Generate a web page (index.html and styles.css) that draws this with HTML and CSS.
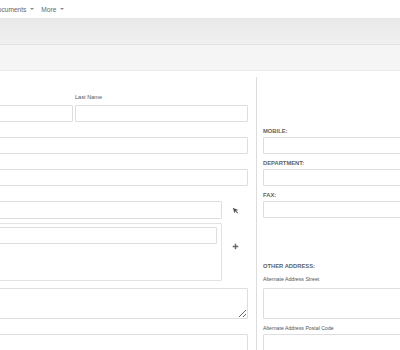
FILE: index.html
```html
<!DOCTYPE html>
<html lang="en">
<head>
    <meta charset="UTF-8">
    <meta name="viewport" content="width=device-width, initial-scale=1.0">
    <title>Edit Contact</title>
    <link rel="stylesheet" href="styles.css">
</head>
<body>
    <nav class="topnav">
        <a class="nav-item">Documents <span class="caret"></span></a>
        <a class="nav-item">More <span class="caret"></span></a>
    </nav>

    <div class="toolbar"></div>
    <div class="subbar"></div>

    <main class="edit-view">
        <section class="panel panel-left">
            <div class="row row-split">
                <div class="field">
                    <span class="field-label"></span>
                    <input class="input" type="text" name="first_name">
                </div>
                <div class="field">
                    <label class="field-label">Last Name</label>
                    <input class="input" type="text" name="last_name">
                </div>
            </div>

            <div class="field">
                <span class="field-label"></span>
                <input class="input" type="text" name="title">
            </div>

            <div class="field">
                <span class="field-label"></span>
                <input class="input" type="text" name="phone_work">
            </div>

            <div class="field field-tight">
                <span class="field-label"></span>
                <div class="with-action">
                    <input class="input input-tall" type="text" name="account_name">
                    <span class="action">
                        <svg width="7" height="7" viewBox="0 0 10 10"><path d="M1 1 L9 4.2 L5.8 5.2 L8.6 8.2 L7.6 9.2 L4.8 6.2 L3.6 9 Z" fill="#555"/></svg>
                    </span>
                </div>
            </div>

            <div class="with-action with-action-top">
                <div class="email-box">
                    <input class="input" type="text" name="email1">
                </div>
                <span class="action action-plus">
                    <svg width="7" height="7" viewBox="0 0 10 10"><path d="M5 1 V9 M1 5 H9" stroke="#666" stroke-width="2"/></svg>
                </span>
            </div>

            <textarea class="textarea textarea-gap" name="primary_address"></textarea>

            <div class="field">
                <span class="field-label"></span>
                <input class="input" type="text" name="assigned_user">
            </div>
        </section>

        <section class="panel panel-right">
            <div class="field">
                <label class="caps-label">Mobile:</label>
                <input class="input" type="text" name="phone_mobile">
            </div>
            <div class="field">
                <label class="caps-label">Department:</label>
                <input class="input" type="text" name="department">
            </div>
            <div class="field">
                <label class="caps-label">Fax:</label>
                <input class="input" type="text" name="phone_fax">
            </div>

            <h4 class="caps-label group-title">Other Address:</h4>
            <label class="small-label">Alternate Address Street</label>
            <textarea class="textarea" name="alt_address_street"></textarea>
            <label class="small-label small-label-gap">Alternate Address Postal Code</label>
            <input class="input" type="text" name="alt_address_postalcode">
        </section>
    </main>
</body>
</html>
```

FILE: styles.css
```css
body {
    margin: 0;
    font-family: "Liberation Sans", Arial, sans-serif;
    color: #444;
    background: #fff;
    overflow: hidden;
}
.topnav {
    height: 18px;
    display: flex;
    align-items: center;
    margin-left: -7px;
    border-bottom: 1px solid #e6e6e6;
    white-space: nowrap;
}
.nav-item {
    font-size: 6.6px;
    color: #666;
    margin-right: 7px;
    display: flex;
    align-items: center;
}
.caret {
    display: inline-block;
    width: 0;
    height: 0;
    margin-left: 4px;
    border-left: 2px solid transparent;
    border-right: 2px solid transparent;
    border-top: 2px solid #888;
}
.toolbar {
    height: 25px;
    background: linear-gradient(#e9e9e9, #f0f0f0);
    border-bottom: 1px solid #e2e2e2;
}
.subbar {
    height: 25px;
    background-color: #f5f5f5;
    border-bottom: 1px solid #ebebeb;
}
.edit-view {
    display: flex;
    align-items: flex-start;
}
.panel-left {
    margin-left: -100px;
    width: 348px;
    padding: 22px 8px 0 0;
    flex-shrink: 0;
}
.panel-right {
    width: 200px;
    flex-shrink: 0;
    margin-top: 6px;
    padding: 50px 0 0 6px;
    border-left: 1px solid #dcdcdc;
    min-height: 300px;
}
.row-split {
    display: grid;
    grid-template-columns: 1fr 1fr;
    gap: 2px;
}
.field {
    margin-bottom: 5px;
}
.field-tight {
    margin-bottom: 4px;
}
.row-split .field-label {
    margin-bottom: 3px;
}
.field-label {
    display: block;
    height: 9px;
    font-size: 5.6px;
    line-height: 9px;
    color: #555;
    margin-bottom: 1px;
}
.caps-label {
    display: block;
    font-size: 5.8px;
    font-weight: bold;
    line-height: 9px;
    text-transform: uppercase;
    color: #5f5f5f;
    margin: 0 0 1px;
}
.group-title {
    margin: 44px 0 4px;
}
.small-label {
    display: block;
    font-size: 5.2px;
    line-height: 9px;
    color: #555;
    margin-bottom: 4px;
}
.small-label-gap {
    margin: 5px 0 1px;
}
.input {
    display: block;
    box-sizing: border-box;
    width: 100%;
    height: 17px;
    margin: 0;
    border: 1px solid #dedede;
    border-radius: 1px;
    background: #fff;
}
.input-tall {
    height: 18px;
}
.textarea {
    display: block;
    box-sizing: border-box;
    width: 100%;
    height: 31px;
    margin: 0;
    border: 1px solid #dedede;
    border-radius: 1px;
    resize: vertical;
}
.textarea-gap {
    margin: 7px 0 5px;
}
.with-action {
    display: flex;
    align-items: center;
}
.with-action-top {
    align-items: flex-start;
}
.action {
    width: 26px;
    flex-shrink: 0;
    display: flex;
    justify-content: center;
}
.action-plus {
    margin-top: 20px;
}
.email-box {
    flex: 1;
    box-sizing: border-box;
    height: 58px;
    padding: 3px 4px;
    border: 1px solid #e2e2e2;
    border-radius: 1px;
}
```
